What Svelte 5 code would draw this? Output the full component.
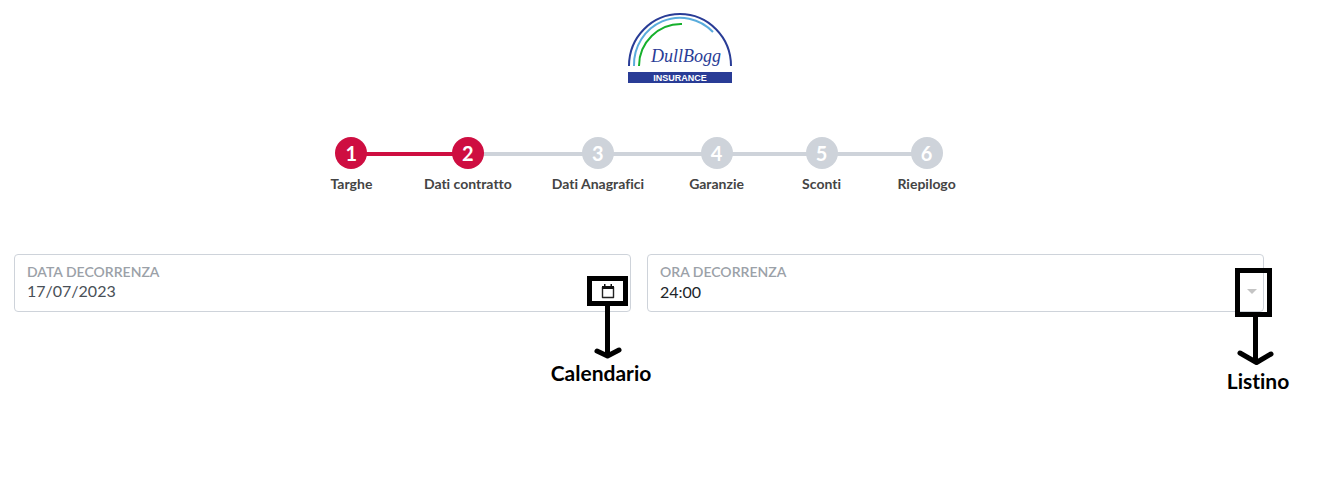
<script>
  const steps = ['Targhe', 'Dati contratto', 'Dati Anagrafici', 'Garanzie', 'Sconti', 'Riepilogo'];
  const current = 2;
  let date = $state('17/07/2023');
  let time = $state('24:00');
</script>

<header>
  <svg class="logo" viewBox="0 0 104 70" role="img" aria-label="DullBogg Insurance">
    <g fill="none" stroke-width="2">
      <path d="M1 53A51 52 0 0 1 103 53" stroke="#293c96" />
      <path d="M6 53A46 47 0 0 1 85 19" stroke="#5aacdc" />
      <path d="M11 53A42 42 0 0 1 54 11" stroke="#16b02c" />
    </g>
    <text class="signature" x="58" y="49" text-anchor="middle">DullBogg</text>
    <rect y="59" width="104" height="11" fill="#293c96" />
    <text class="insurance" x="52" y="68" text-anchor="middle">INSURANCE</text>
  </svg>
</header>

<main>
  <ol class="steps">
    {#each steps as step, i}
      <li class:done={i < current} class:active={i + 1 === current}>
        <span class="circle">{i + 1}</span>
        <span class="name">{step}</span>
      </li>
    {/each}
  </ol>

  <form class="fields">
    <div class="field">
      <label for="date">DATA DECORRENZA</label>
      <input id="date" type="text" bind:value={date} />
      <button class="calendar" type="button" aria-label="Calendario">
        <svg viewBox="0 0 14 15">
          <path d="M1.500 3v10.500h11V3" fill="none" stroke="#222" stroke-width="1.4" stroke-linejoin="round" />
          <path d="M1 2h12v3H1zM3 0h1.500v3H3zM9.500 0H11v3H9.500z" fill="#111" />
        </svg>
      </button>
      <div class="note note-calendar">
        <svg width="41" height="84" viewBox="0 0 41 84" fill="none" stroke="#000" stroke-width="5">
          <path d="M2.500 2.500h36v25h-36zM20.500 28v51" />
          <path d="M10 75l10.500 5L32 74" stroke-linecap="round" stroke-linejoin="round" />
        </svg>
        <span>Calendario</span>
      </div>
    </div>

    <div class="field">
      <label for="time">ORA DECORRENZA</label>
      <select id="time" bind:value={time}>
        <option>24:00</option>
      </select>
      <svg class="caret" viewBox="0 0 10 5"><path d="M0 0h10L5 5z" fill="#c4c4c4" /></svg>
      <div class="note note-list">
        <svg width="41" height="100" viewBox="-2 0 41 100" fill="none" stroke="#000" stroke-width="5">
          <path d="M2.500 2.500h32v44h-32zM20.500 47v46" />
          <path d="M5 85l16.500 9.500L36 86" stroke-linecap="round" stroke-linejoin="round" />
        </svg>
        <span>Listino</span>
      </div>
    </div>
  </form>
</main>

<style>
  :global(body) {
    margin: 0;
    background: #fff;
    font-family: Lato, sans-serif;
    font-variant-ligatures: none;
  }
  header {
    display: flex;
    justify-content: center;
    padding: 13px 0 0 29px;
  }
  .logo {
    width: 104px;
    height: 70px;
  }
  .signature {
    font: italic 18px "Liberation Serif", serif;
    fill: #293c96;
  }
  .insurance {
    font: bold 9px "Liberation Sans", sans-serif;
    fill: #fff;
  }
  main {
    padding: 54px 67px 160px 14px;
  }
  .steps {
    display: flex;
    justify-content: center;
    list-style: none;
    margin: 0;
    padding: 0;
  }
  li {
    position: relative;
    box-sizing: border-box;
    min-width: 105px;
    padding: 0 20px;
    display: flex;
    flex-direction: column;
    align-items: center;
    gap: 6px;
  }
  li::before,
  li::after {
    content: "";
    position: absolute;
    top: 15px;
    width: 50%;
    height: 4px;
    background: #ced3da;
  }
  li::before {
    left: 0;
  }
  li::after {
    right: 0;
  }
  li.done::before,
  li.done:not(.active)::after {
    background: #ce0e41;
  }
  li:first-child::before,
  li:last-child::after {
    display: none;
  }
  .circle {
    position: relative;
    z-index: 1;
    width: 32px;
    height: 32px;
    border-radius: 50%;
    background: #ced3da;
    color: #fff;
    font-size: 20px;
    font-weight: 700;
    line-height: 32px;
    text-align: center;
  }
  .done .circle {
    background: #ce0e41;
  }
  .name {
    color: #444;
    font-size: 14px;
    font-weight: 700;
    line-height: 18px;
    white-space: nowrap;
  }
  .fields {
    display: grid;
    grid-template-columns: 1fr 1fr;
    gap: 16px;
    margin-top: 61px;
  }
  .field {
    position: relative;
    box-sizing: border-box;
    height: 58px;
    padding: 8px 12px;
    border: 1px solid #ced3da;
    border-radius: 4px;
  }
  label {
    display: block;
    color: #9ba1a8;
    font-size: 14px;
    font-weight: 600;
    line-height: 18px;
  }
  input,
  select {
    display: block;
    width: 100%;
    height: 22px;
    margin: 0;
    padding: 0;
    border: 0;
    outline: 0;
    appearance: none;
    background: transparent;
    color: #212529;
    font: 16px/22px Lato, sans-serif;
  }
  input {
    height: 20px;
    color: #495057;
  }
  .calendar {
    position: absolute;
    right: 15px;
    top: 29px;
    width: 14px;
    height: 15px;
    padding: 0;
    border: 0;
    background: none;
  }
  .calendar svg {
    display: block;
  }
  .caret {
    position: absolute;
    right: 6px;
    top: 34px;
    width: 10px;
    height: 5px;
  }
  .note {
    position: absolute;
    display: flex;
    flex-direction: column;
    align-items: center;
    width: 110px;
    pointer-events: none;
    color: #000;
    font-size: 21px;
    font-weight: 700;
    line-height: 26px;
  }
  .note-calendar {
    top: 21px;
    right: -32px;
  }
  .note-list {
    top: 13px;
    right: -45px;
  }
  .note-calendar span {
    margin-right: 12px;
  }
  .note-list span {
    margin-left: 10px;
  }
</style>
